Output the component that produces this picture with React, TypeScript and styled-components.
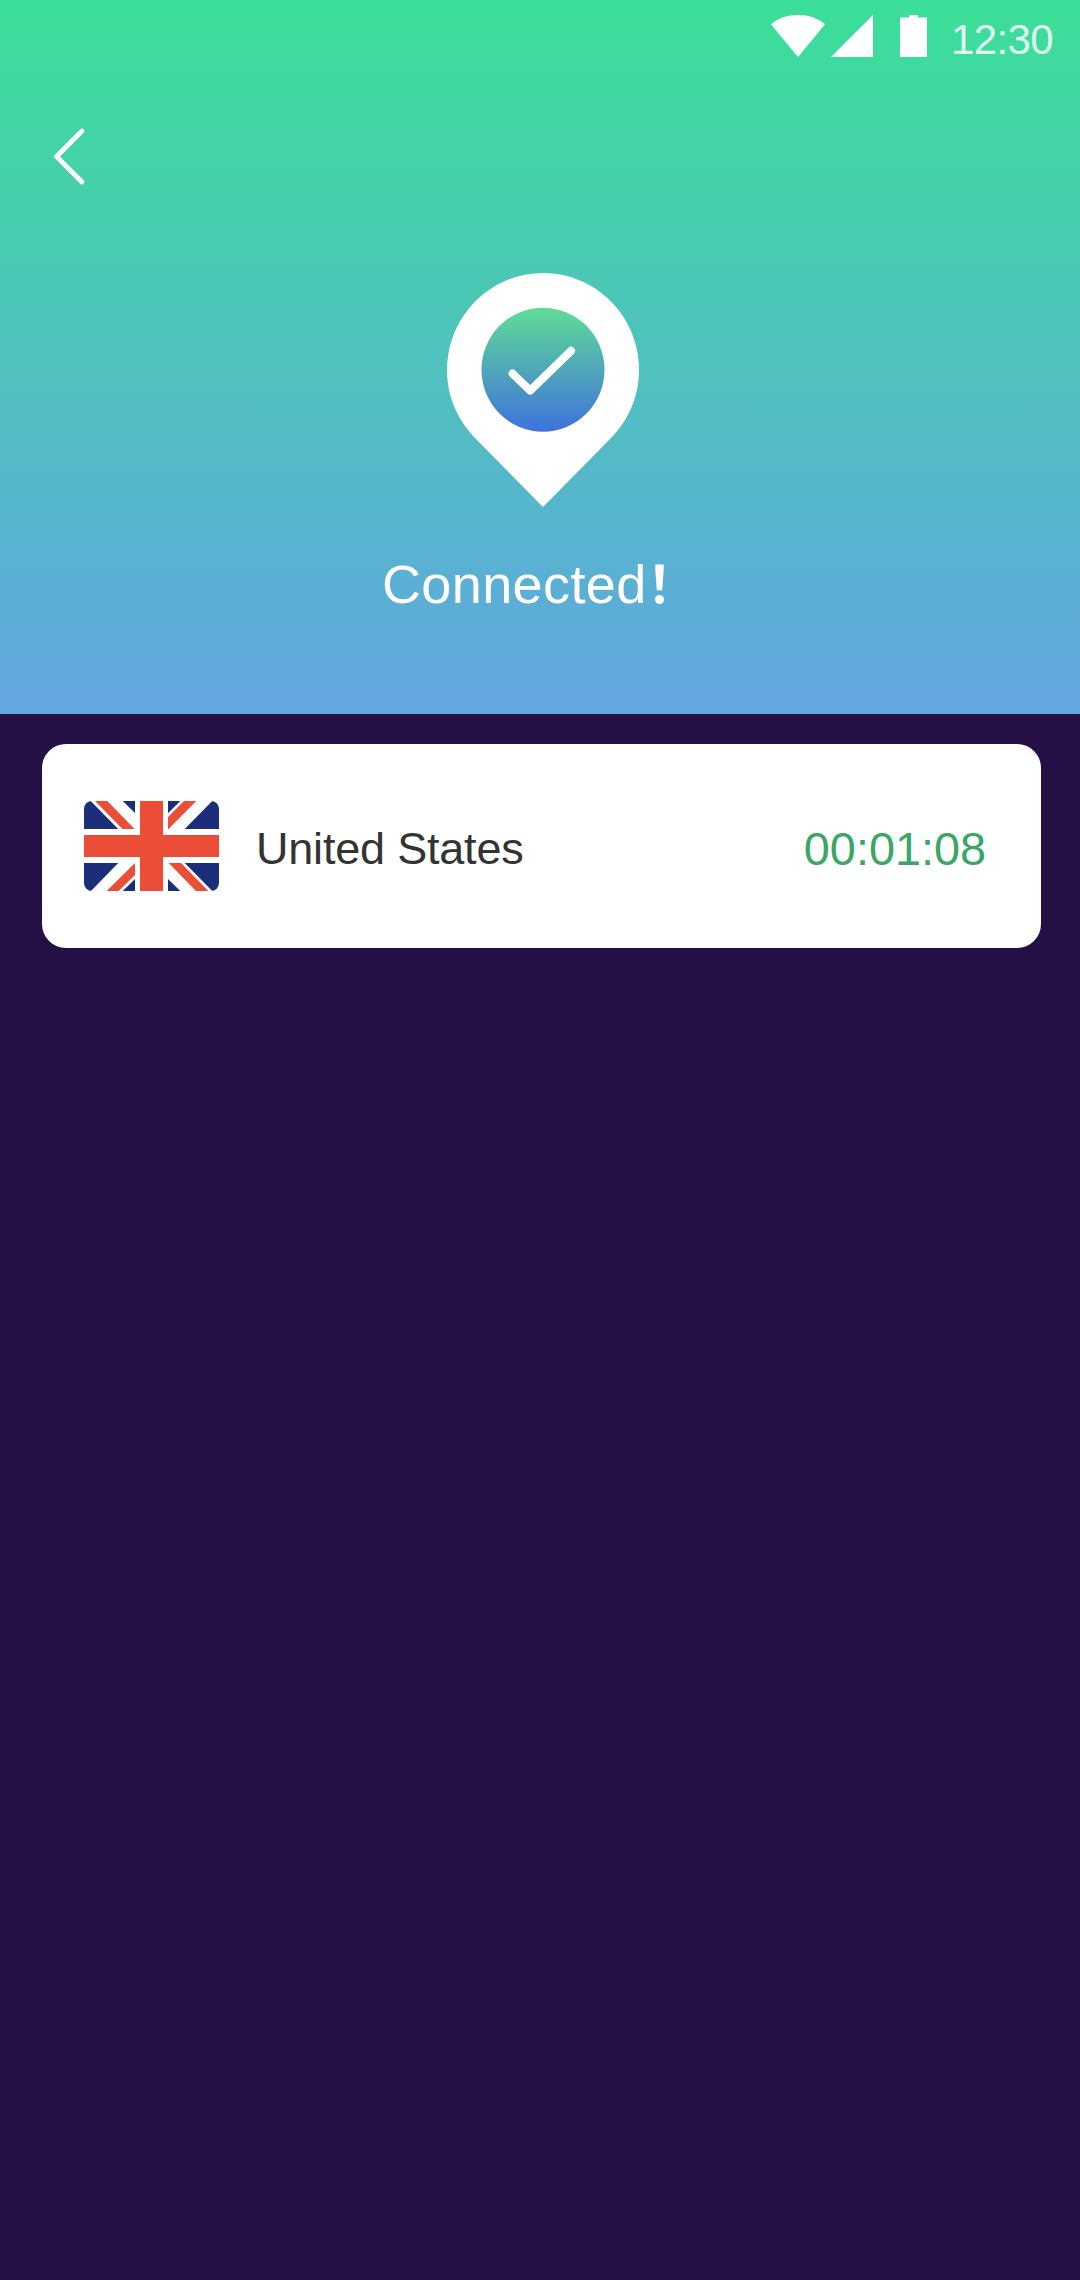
import React from "react";
import styled, { createGlobalStyle } from "styled-components";

const GlobalStyle = createGlobalStyle`
  * { box-sizing: border-box; }
  body {
    margin: 0;
    background: #251045;
    font-family: "Liberation Sans", "Noto Sans CJK SC", sans-serif;
  }
  svg { display: block; }
`;

const Screen = styled.main`
  width: 1080px;
  height: 2280px;
  background: #251045;
  display: flex;
  flex-direction: column;
  overflow: hidden;
`;

const Header = styled.header`
  height: 714px;
  display: flex;
  flex-direction: column;
  background: linear-gradient(180deg, #3bdf98 0%, #62a5e2 100%);
`;

const StatusBar = styled.div`
  height: 72px;
  padding: 15px 27px 0 0;
  display: flex;
  justify-content: flex-end;
  align-items: flex-start;
`;

const StatusIcon = styled.svg<{ $gap: number }>`
  margin-right: ${(p) => p.$gap}px;
  fill: #fff;
`;

const Clock = styled.span`
  padding-top: 1px;
  font-size: 42px;
  line-height: 48px;
  letter-spacing: -0.6px;
  color: rgba(255, 255, 255, 0.87);
`;

const NavBar = styled.nav`
  height: 168px;
  padding: 54px 0 0 50px;
`;

const BackButton = styled.button`
  padding: 0;
  border: 0;
  background: none;
  color: #fff;
`;

const Status = styled.section`
  display: flex;
  flex-direction: column;
  align-items: center;
`;

const PinIcon = styled.svg`
  margin: 33px 0 0 6px;
`;

const StatusText = styled.h1`
  margin: 44px 0 0;
  font-size: 54px;
  line-height: 66px;
  font-weight: 400;
  letter-spacing: 0.4px;
  color: #fff;
`;

const Exclamation = styled.span`
  font-family: "Noto Sans CJK SC", sans-serif;
  font-weight: 700;
  font-size: 51px;
  line-height: 1;
`;

const LocationCard = styled.section`
  margin: 30px 39px 0 42px;
  height: 204px;
  padding: 0 55px 0 42px;
  display: flex;
  align-items: center;
  border-radius: 24px;
  background: #fff;
`;

const Flag = styled.svg`
  border-radius: 8px;
`;

const Country = styled.span`
  margin-left: 37px;
  flex: 1;
  font-size: 45px;
  line-height: 52px;
  letter-spacing: -0.2px;
  padding-top: 6px;
  color: #333;
`;

const Duration = styled.time`
  font-size: 46.8px;
  line-height: 52px;
  padding-top: 5px;
  color: #3aa667;
`;

function UnionFlag() {
  return (
    <Flag width="135" height="90" viewBox="0 0 135 90">
      <rect width="135" height="90" fill="#fff" />
      <g fill="#1c2e7a">
        <path d="M0 0H6.7L34.2 28H0Z" />
        <path d="M38.7 0H51V12Z" />
        <path d="M84 0H96.3L84 12.3Z" />
        <path d="M128.3 0H135V28H100.7Z" />
        <path d="M0 62H34.2L7 90H0Z" />
        <path d="M51 78V90H38.7Z" />
        <path d="M84 78L96.3 90H84Z" />
        <path d="M100.7 62H135V90H128.3Z" />
      </g>
      <g fill="#eb4d36">
        <path d="M11 0H23.3L50.6 28H38.5Z" />
        <path d="M100 0H112.3L84.5 28H84V16Z" />
        <path d="M51 62V74L34.7 90H22.7Z" />
        <path d="M84.7 62H97L124.3 90H112Z" />
        <path d="M56 0H79V34H135V56H79V90H56V56H0V34H56Z" />
      </g>
    </Flag>
  );
}

export default function App() {
  return (
    <>
      <GlobalStyle />
      <Screen>
        <Header>
          <StatusBar>
            <StatusIcon $gap={6} width="54" height="42" viewBox="0 0 54 42">
              <path d="M27 42L0 9.2C7.5 3.2 16.5 0 27 0S46.5 3.2 54 9.2Z" />
            </StatusIcon>
            <StatusIcon $gap={27} width="42" height="42" viewBox="0 0 42 42">
              <path d="M42 0V42H0Z" />
            </StatusIcon>
            <StatusIcon $gap={24} width="27" height="42" viewBox="0 0 27 42">
              <path d="M9 0H18V2.5H27V42H0V2.5H9Z" />
            </StatusIcon>
            <Clock>12:30</Clock>
          </StatusBar>
          <NavBar>
            <BackButton aria-label="Back">
              <svg width="38" height="60" viewBox="0 0 38 60">
                <path
                  d="M32 5L6.6 30.5L32 56"
                  fill="none"
                  stroke="currentColor"
                  strokeWidth="4.8"
                  strokeLinecap="round"
                  strokeLinejoin="round"
                />
              </svg>
            </BackButton>
          </NavBar>
          <Status>
            <PinIcon width="192" height="234" viewBox="0 0 192 234">
              <defs>
                <linearGradient id="badge" x1="0" y1="0" x2="0" y2="1">
                  <stop offset="0" stopColor="#5fdc98" />
                  <stop offset="1" stopColor="#3f72dc" />
                </linearGradient>
              </defs>
              <path
                d="M96 234L27.5 164.5C10 146 0 123 0 97C0 43.5 43 0 96 0S192 43.5 192 97C192 123 182 146 164.5 164.5Z"
                fill="#fff"
              />
              <ellipse cx="96" cy="96.7" rx="61.5" ry="62" fill="url(#badge)" />
              <path
                d="M65.6 100.6L83.2 117.6L124 77.8"
                fill="none"
                stroke="#fff"
                strokeWidth="8"
                strokeLinecap="round"
                strokeLinejoin="round"
              />
            </PinIcon>
            <StatusText>
              Connected<Exclamation>！</Exclamation>
            </StatusText>
          </Status>
        </Header>
        <LocationCard>
          <UnionFlag />
          <Country>United States</Country>
          <Duration>00:01:08</Duration>
        </LocationCard>
      </Screen>
    </>
  );
}
